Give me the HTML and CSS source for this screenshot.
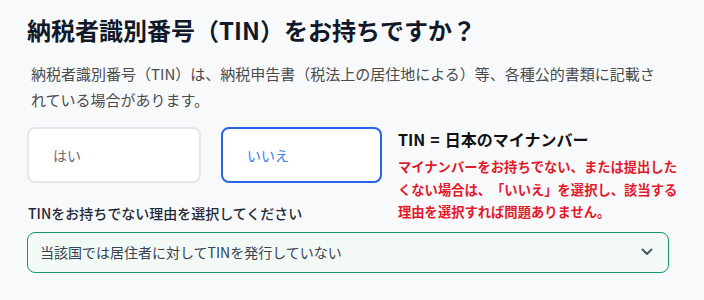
FILE: index.html
```html
<!DOCTYPE html>
<html lang="ja">
<head>
<meta charset="utf-8">
<link rel="stylesheet" href="styles.css">
</head>
<body>
<main class="page">
  <h1 class="title">納税者識別番号（TIN）をお持ちですか？</h1>
  <p class="desc">納税者識別番号（TIN）は、納税申告書（税法上の居住地による）等、各種公的書類に記載されている場合があります。</p>
  <div class="row">
    <div class="left">
      <div class="choices">
        <button class="choice choice-yes" type="button">はい</button>
        <button class="choice choice-no" type="button">いいえ</button>
      </div>
      <div class="label">TINをお持ちでない理由を選択してください</div>
    </div>
    <div class="info">
      <div class="info-title">TIN<span class="eq">=</span>日本のマイナンバー</div>
      <div class="info-note">マイナンバーをお持ちでない、または提出したくない場合は、「いいえ」を選択し、該当する理由を選択すれば問題ありません。</div>
    </div>
  </div>
  <div class="select">
    <span class="select-text">当該国では居住者に対してTINを発行していない</span>
    <svg class="chev" width="12" height="8" viewBox="0 0 12 8"><polyline points="1.5,1.5 6,6 10.5,1.5" fill="none" stroke="#4b5563" stroke-width="2" stroke-linecap="round" stroke-linejoin="round"/></svg>
  </div>
</main>
</body>
</html>
```
FILE: styles.css
```css
html, body {
  margin: 0;
  padding: 0;
  background: #f8f9fb;
}
body {
  font-family: "Noto Sans CJK JP", "Noto Sans", sans-serif;
  text-spacing-trim: space-all;
}
.page {
  padding: 14px 35px 0 27px;
  width: 642px;
}
.title {
  margin: 0;
  font-size: 24px;
  line-height: 32px;
  font-weight: 700;
  color: #111827;
}
.desc {
  margin: 15px 0 0 0;
  padding-left: 4px;
  max-width: 630px;
  font-size: 15px;
  line-height: 26px;
  color: #4b4b4b;
}
.row {
  display: flex;
  margin-top: 14px;
  gap: 16px;
}
.left {
  display: flex;
  flex-direction: column;
  flex-shrink: 0;
}
.choices {
  display: flex;
  gap: 20px;
}
.choice {
  box-sizing: border-box;
  height: 56px;
  border-radius: 8px;
  background: #ffffff;
  font-family: inherit;
  font-size: 14px;
  text-align: left;
  padding: 0 0 0 24px;
  display: flex;
  align-items: center;
}
.choice-yes {
  width: 174px;
  border: 2px solid #e5e7eb;
  color: #6b6b6b;
}
.choice-no {
  width: 161px;
  border: 2px solid #2563eb;
  color: #3b7bf0;
}
.label {
  margin-top: 20px;
  font-size: 14px;
  line-height: 20px;
  font-weight: 500;
  color: #1f2937;
  padding-left: 1px;
}
.info {
  width: 282px;
  flex-shrink: 0;
}
.info-title {
  font-size: 16px;
  line-height: 24px;
  font-weight: 700;
  color: #111111;
}
.eq {
  margin: 0 5px;
}
.info-note {
  margin-top: 5px;
  font-size: 13.3px;
  line-height: 22.5px;
  font-weight: 700;
  color: #e3192b;
}
.select {
  box-sizing: border-box;
  margin-top: 8px;
  height: 41px;
  border: 1px solid #159868;
  border-radius: 8px;
  background: #f3faf6;
  display: flex;
  align-items: center;
  justify-content: space-between;
  padding: 0 15px 0 12px;
}
.select-text {
  font-size: 14px;
  color: #374151;
}
.chev {
  display: block;
}
```
